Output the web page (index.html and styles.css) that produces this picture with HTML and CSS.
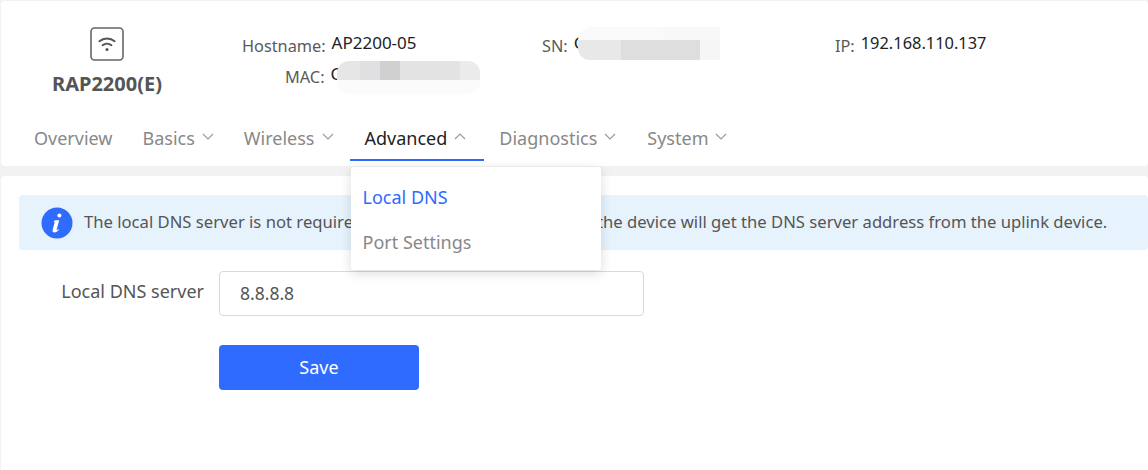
FILE: index.html
```html
<!DOCTYPE html>
<html lang="en">
<head>
<meta charset="utf-8">
<title>Local DNS</title>
<link rel="stylesheet" href="styles.css">
</head>
<body>
<header class="top-card">
  <div class="summary">
    <div class="model">
      <svg class="model-icon" width="34" height="34" viewBox="0 0 34 34" fill="none">
        <rect x="1" y="1" width="32" height="32" rx="3.5" stroke="#666" stroke-width="1.6"/>
        <path d="M9.400 14.200c4.300-3.700 10.900-3.700 15.200 0" stroke="#555" stroke-width="2" stroke-linecap="round"/>
        <path d="M12.600 18.200c2.500-2 6.300-2 8.800 0" stroke="#555" stroke-width="2" stroke-linecap="round"/>
        <circle cx="17" cy="22.400" r="1.500" fill="#555"/>
      </svg>
      <div class="model-name">RAP2200(E)</div>
    </div>
    <div class="info info-host">
      <div class="info-row"><span class="info-label">Hostname:</span><span class="info-value">AP2200-05</span></div>
      <div class="info-row info-row-mac"><span class="info-label">MAC:</span><span class="info-value">C</span><span class="smudge smudge-mac"></span></div>
    </div>
    <div class="info info-sn">
      <div class="info-row"><span class="info-label">SN:</span><span class="info-value">G</span><span class="smudge smudge-sn"></span></div>
    </div>
    <div class="info info-ip">
      <div class="info-row"><span class="info-label">IP:</span><span class="info-value info-value-ip">192.168.110.137</span></div>
    </div>
  </div>
  <nav class="nav">
    <a class="nav-item nav-plain">Overview</a>
    <a class="nav-item">Basics<svg class="chev" width="12" height="7" viewBox="0 0 12 7"><path d="M1 1l5 5 5-5" /></svg></a>
    <a class="nav-item">Wireless<svg class="chev" width="12" height="7" viewBox="0 0 12 7"><path d="M1 1l5 5 5-5" /></svg></a>
    <a class="nav-item nav-active">Advanced<svg class="chev" width="12" height="7" viewBox="0 0 12 7"><path d="M1 6l5-5 5 5" /></svg>
      <div class="menu">
        <div class="menu-item menu-current">Local DNS</div>
        <div class="menu-item">Port Settings</div>
      </div>
    </a>
    <a class="nav-item nav-wide">Diagnostics<svg class="chev" width="12" height="7" viewBox="0 0 12 7"><path d="M1 1l5 5 5-5" /></svg></a>
    <a class="nav-item">System<svg class="chev" width="12" height="7" viewBox="0 0 12 7"><path d="M1 1l5 5 5-5" /></svg></a>
  </nav>
</header>
<main class="content-card">
  <div class="notice">
    <svg class="notice-icon" width="32" height="32" viewBox="0 0 32 32">
      <circle cx="16" cy="16" r="15.5" fill="#2f6bff"/>
      <circle cx="18.4" cy="8.6" r="2" fill="#fff"/>
      <path d="M14 13.2h4.2l-2.5 9.4c-.2.8.5 1 1.900-.5l.5.5c-1.500 2-3.100 2.900-4.700 2.900-1.500 0-2.200-1-1.800-2.500l1.900-7.300c.2-.8-.2-1-1-1z" fill="#fff"/>
    </svg>
    <p class="notice-text">The local DNS server is not required. If no servers are configured, the device will get the DNS server address from the uplink device.</p>
  </div>
  <form class="form">
    <div class="field">
      <label class="field-label" for="dns">Local DNS server</label>
      <input class="field-input" id="dns" type="text" value="8.8.8.8">
    </div>
    <button class="save" type="button">Save</button>
  </form>
</main>
</body>
</html>
```
FILE: styles.css
```css
* { box-sizing: border-box; }
html, body { height: 100%; }
body {
  margin: 0;
  padding: 1px 0 0 1px;
  background: #f2f2f2;
  font-family: "Noto Sans", "Open Sans", sans-serif;
  overflow: hidden;
}
.top-card {
  height: 165px;
  background: #fff;
  border-radius: 4px;
  display: flex;
  flex-direction: column;
}
.summary {
  display: flex;
  height: 118px;
  position: relative;
}
.model {
  width: 212px;
  display: flex;
  flex-direction: column;
  align-items: center;
  padding-top: 26px;
}
.model-icon { display: block; }
.model-name {
  margin-top: 9px;
  font-size: 20px;
  line-height: 28px;
  font-weight: 700;
  color: #555;
}
.info { padding-top: 31px; font-size: 16.300px; }
.info-host { width: 329px; padding-left: 29px; }
.info-sn { width: 293px; }
.info-ip { flex: 1; }
.info-row {
  display: flex;
  align-items: flex-start;
  position: relative;
}
.info-row-mac { margin-top: 3px; padding-left: 43px; }
.info-label {
  color: #5a5a5a;
  line-height: 28px;
  margin-right: 6px;
}
.info-value {
  color: #222;
  font-size: 17px;
  line-height: 22px;
}
.info-value-ip { font-size: 16.400px; }
.smudge {
  position: absolute;
  border-radius: 12px;
}
.smudge-mac {
  left: 95px;
  top: -2px;
  width: 143px;
  height: 33px;
  background:
    linear-gradient(90deg, #e6e6e6 0 16%, #e0e0e3 16% 30%, #d0d0d0 30% 44%, #e3e3e3 44% 86%, #ebebeb 86%) 0 0 / 100% 19px no-repeat,
    #fbfbfb;
}
.smudge-sn {
  left: 36px;
  top: -5px;
  width: 142px;
  height: 33px;
  border-radius: 14px 0 0 12px;
  background:
    linear-gradient(90deg, #e8e8e8 0 30%, #dedede 30% 86%, #f6f6f6 86%) 0 13px / 100% 20px no-repeat,
    linear-gradient(90deg, #fafafa 0 60%, #f8f8f8 60%);
}
.nav {
  display: flex;
  height: 44px;
  padding-left: 33px;
  gap: 30px;
  font-size: 18px;
  color: #888;
}
.nav-item {
  position: relative;
  display: flex;
  align-items: center;
  gap: 7px;
  height: 42px;
  padding-bottom: 4px;
  line-height: 38px;
}
.nav-wide { margin-right: 1px; }
.chev { fill: none; stroke: #999; stroke-width: 1.1; margin-top: -4px; }
.nav-active {
  color: #222;
  margin: 0 -15px 0 -14px;
  padding: 0 18px 2px 15px;
  height: 42px;
  border-bottom: 2px solid #2f6bff;
}
.menu {
  position: absolute;
  left: 1px;
  top: 48px;
  width: 250px;
  height: 103px;
  padding-top: 8px;
  background: #fff;
  border-radius: 3px;
  box-shadow: 0 3px 12px rgba(0,0,0,.14);
  z-index: 5;
}
.menu-item {
  height: 45px;
  line-height: 45px;
  padding-left: 12px;
  color: #888;
  font-size: 18px;
}
.menu-current { color: #2f6bff; }
.content-card {
  margin-top: 10px;
  height: 300px;
  padding: 19px 0 0 18px;
  background: #fff;
  border-radius: 4px;
}
.notice {
  display: flex;
  align-items: center;
  height: 55px;
  padding-left: 22px;
  gap: 11px;
  background: #e6f3fd;
  border-radius: 4px;
}
.notice-icon { flex: none; }
.notice-text {
  margin: 0 0 2px;
  font-size: 16.650px;
  color: #555;
  white-space: nowrap;
}
.form { padding-top: 21px; }
.field { display: flex; align-items: center; gap: 15px; }
.field-label {
  width: 185px;
  text-align: right;
  font-size: 18px;
  color: #555;
  line-height: 45px;
  margin-top: -4px;
}
.field-input {
  width: 425px;
  height: 45px;
  padding: 0 20px 2px;
  border: 1px solid #d9d9d9;
  border-radius: 4px;
  font: 17.500px "Noto Sans", sans-serif;
  color: #555;
  outline: none;
}
.save {
  display: block;
  margin: 29px 0 0 200px;
  width: 200px;
  height: 45px;
  padding: 0 0 2px;
  background: #2f6bff;
  border: 0;
  border-radius: 4px;
  color: #fff;
  font: 18px "Noto Sans", sans-serif;
}
```
